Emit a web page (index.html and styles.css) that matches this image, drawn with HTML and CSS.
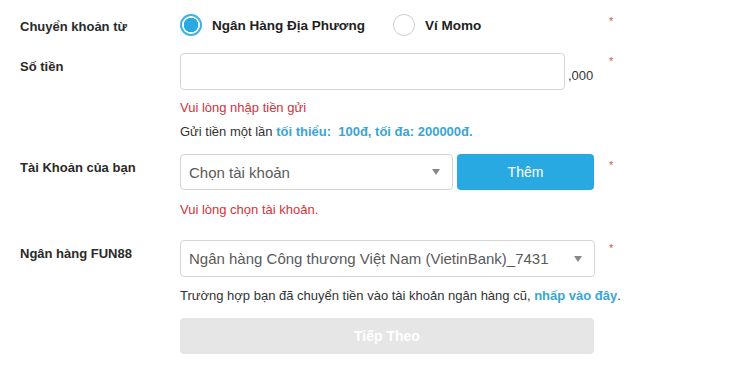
FILE: index.html
```html
<!DOCTYPE html>
<html lang="vi">
  <head>
    <meta charset="UTF-8" />
    <meta name="viewport" content="width=device-width, initial-scale=1.0" />
    <title>Gửi tiền</title>
    <link rel="stylesheet" href="styles.css">
  </head>
  <body>
    <div class="form">
      <div class="row row-from">
        <div class="label">Chuyển khoản từ</div>
        <div class="field radios">
          <label class="radio">
            <span class="dot checked"></span>
            <span>Ngân Hàng Địa Phương</span>
          </label>
          <label class="radio">
            <span class="dot"></span>
            <span>Ví Momo</span>
          </label>
        </div>
        <span class="req">*</span>
      </div>

      <div class="row row-amount">
        <div class="label">Số tiền</div>
        <div class="field amount">
          <div class="input"></div>
          <span class="unit">,000</span>
        </div>
        <span class="req">*</span>
      </div>
      <div class="msg error first">Vui lòng nhập tiền gửi</div>
      <div class="msg info">Gửi tiền một lần <b>tối thiểu:&nbsp; 100đ, tối đa: 200000đ.</b></div>

      <div class="row row-account">
        <div class="label">Tài Khoản của bạn</div>
        <div class="field account">
          <div class="select short">
            <span class="placeholder">Chọn tài khoản</span>
            <span class="caret"></span>
          </div>
          <div class="btn-add">Thêm</div>
        </div>
        <span class="req">*</span>
      </div>
      <div class="msg error">Vui lòng chọn tài khoản.</div>

      <div class="row row-bank">
        <div class="label">Ngân hàng FUN88</div>
        <div class="field">
          <div class="select">
            <span class="placeholder">Ngân hàng Công thương Việt Nam (VietinBank)_7431</span>
            <span class="caret"></span>
          </div>
        </div>
        <span class="req">*</span>
      </div>
      <div class="msg note">Trường hợp bạn đã chuyển tiền vào tài khoản ngân hàng cũ, <b>nhấp vào đây</b>.</div>

      <div class="btn-next">Tiếp Theo</div>
    </div>
  </body>
</html>
```

FILE: styles.css
```css
body {
  margin: 0;
  background: #fff;
  font-family: "Liberation Sans", Arial, sans-serif;
  color: #333;
}
.form {
  padding: 13px 0 0 20px;
}
.row {
  display: flex;
  align-items: flex-start;
}
.label {
  width: 160px;
  font-size: 13px;
  font-weight: bold;
  color: #2a2a2a;
  line-height: 18px;
}
.field {
  width: 415px;
}
.req {
  color: #d9534f;
  font-size: 11px;
  margin-left: 14px;
  line-height: 12px;
}

/* radios */
.row-from .label {
  padding-top: 5px;
}
.row-from .req {
  margin-top: 2px;
}
.radios {
  display: flex;
  height: 24px;
}
.radio {
  display: flex;
  align-items: center;
  font-size: 13.5px;
  font-weight: bold;
  color: #222;
  width: 213px;
}
.radio:last-child {
  width: auto;
}
.dot {
  width: 22px;
  height: 22px;
  border: 1px solid #ccc;
  border-radius: 50%;
  margin-right: 10px;
  box-sizing: border-box;
}
.dot.checked {
  border: 2px solid #3fb2e3;
  background: radial-gradient(circle, #29a9e1 0 7px, #fff 7.5px);
}

/* amount */
.row-amount {
  margin-top: 16px;
}
.row-amount .label {
  padding-top: 5px;
}
.row-amount .req {
  margin-top: 2px;
}
.amount {
  display: flex;
  align-items: center;
}
.input {
  width: 385px;
  height: 37px;
  border: 1px solid #d5d5d5;
  border-radius: 4px;
  box-sizing: border-box;
}
.unit {
  font-size: 13px;
  margin-left: 3px;
  margin-top: 8px;
  color: #333;
}

/* messages */
.msg {
  margin-left: 160px;
  font-size: 13px;
  line-height: 18px;
}
.error {
  color: #d0343d;
  margin-top: 11px;
}
.error.first {
  margin-top: 9px;
}
.info {
  margin-top: 6px;
  color: #333;
}
.info b,
.note b {
  color: #3aa5d3;
}
.note {
  margin-top: 10px;
}

/* selects */
.select {
  height: 37px;
  border: 1px solid #d5d5d5;
  border-radius: 4px;
  box-sizing: border-box;
  display: flex;
  align-items: center;
  justify-content: space-between;
  padding: 0 12px 0 8px;
}
.select.short {
  width: 273px;
  height: 36px;
}
.placeholder {
  font-size: 15px;
  color: #5a5a5a;
}
.caret {
  width: 0;
  height: 0;
  border-left: 4px solid transparent;
  border-right: 4px solid transparent;
  border-top: 6px solid #888;
}

.row-account {
  margin-top: 13px;
}
.row-account .label {
  padding-top: 5px;
}
.row-account .req {
  margin-top: 5px;
}
.account {
  display: flex;
  gap: 4px;
}
.btn-add {
  width: 137px;
  height: 36px;
  background: #29a9e1;
  border-radius: 4px;
  color: #fff;
  font-size: 14px;
  display: flex;
  align-items: center;
  justify-content: center;
}

.row-bank {
  margin-top: 21px;
}
.row-bank .label {
  padding-top: 5px;
}
.row-bank .req {
  margin-top: 2px;
}

.btn-next {
  margin: 13px 0 0 160px;
  width: 414px;
  height: 36px;
  background: #e6e6e6;
  border-radius: 4px;
  color: #fff;
  font-size: 14px;
  font-weight: bold;
  display: flex;
  align-items: center;
  justify-content: center;
}
```
